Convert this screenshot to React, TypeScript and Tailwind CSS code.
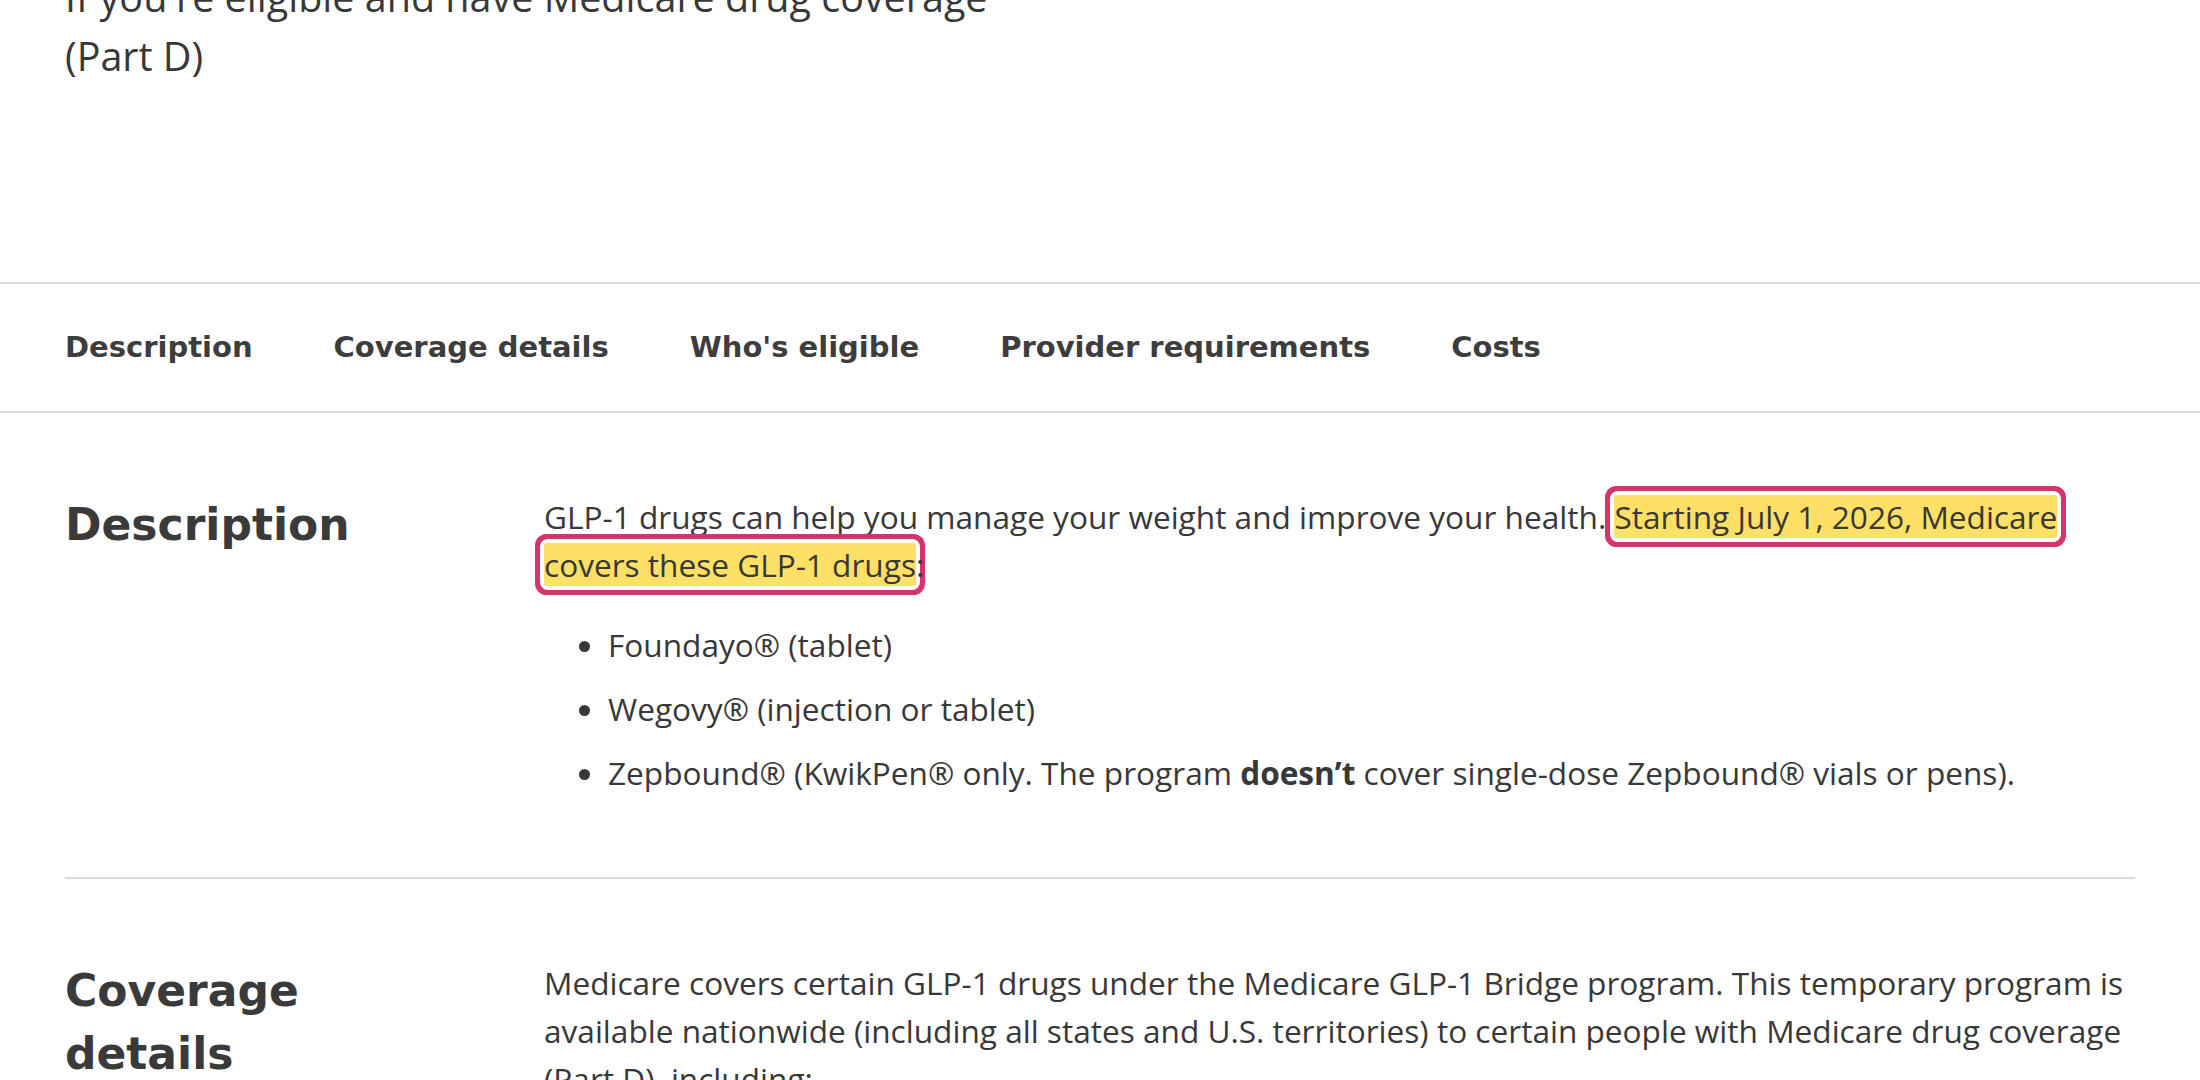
import React from "react";

const tabs = ["Description", "Coverage details", "Who's eligible", "Provider requirements", "Costs"];

function Section({ title, children }: { title: string; children: React.ReactNode }) {
  return (
    <section className="grid grid-cols-[400px_1fr] gap-x-[79px] border-b-2 border-[#d9d9d9] pt-20 pb-20">
      <h2 className="font-['DejaVu_Sans',sans-serif] text-[44px] font-bold leading-[63px] text-[#3a3a3a]">
        {title}
      </h2>
      <div>{children}</div>
    </section>
  );
}

export default function App() {
  return (
    <div className="min-h-screen bg-white font-['Open_Sans',sans-serif] text-[#383838]">
      {/* Intro text, scrolled partly off the top */}
      <div className="px-[65px] pb-[196px]">
        <p className="-mt-[32px] max-w-[960px] text-[39.5px] leading-[59px]">
          If you're eligible and have Medicare drug coverage (Part D)
        </p>
      </div>

      {/* Tab bar */}
      <nav className="flex h-[131px] items-center gap-[81px] border-y-2 border-[#d9d9d9] px-[65px]">
        {tabs.map((t) => (
          <a
            key={t}
            className="font-['DejaVu_Sans',sans-serif] text-[29px] font-semibold text-[#3d3d3d]"
          >
            {t}
          </a>
        ))}
      </nav>

      <div className="px-[65px]">
        <Section title="Description">
          <p className="mb-8 text-[31.6px] leading-[48px]">
            GLP-1 drugs can help you manage your weight and improve your health.{" "}
            <span className="box-decoration-clone rounded-[4px] bg-[#ffe066] shadow-[0_0_0_4px_#ffffff,0_0_0_9px_#d4336b]">
              Starting July 1, 2026, Medicare covers these GLP-1 drugs
            </span>
            :
          </p>
          <ul className="list-disc space-y-4 pl-16 text-[31.6px] leading-[48px]">
            <li>Foundayo® (tablet)</li>
            <li>Wegovy® (injection or tablet)</li>
            <li>
              Zepbound® (KwikPen® only. The program <strong className="font-bold">doesn’t</strong> cover
              single-dose Zepbound® vials or pens).
            </li>
          </ul>
        </Section>

        <Section title="Coverage details">
          <p className="text-[31.6px] leading-[48px]">
            Medicare covers certain GLP-1 drugs under the Medicare GLP-1 Bridge program. This temporary program is
            available nationwide (including all states and U.S. territories) to certain people with Medicare drug
            coverage (Part D), including:
          </p>
        </Section>
      </div>
    </div>
  );
}
